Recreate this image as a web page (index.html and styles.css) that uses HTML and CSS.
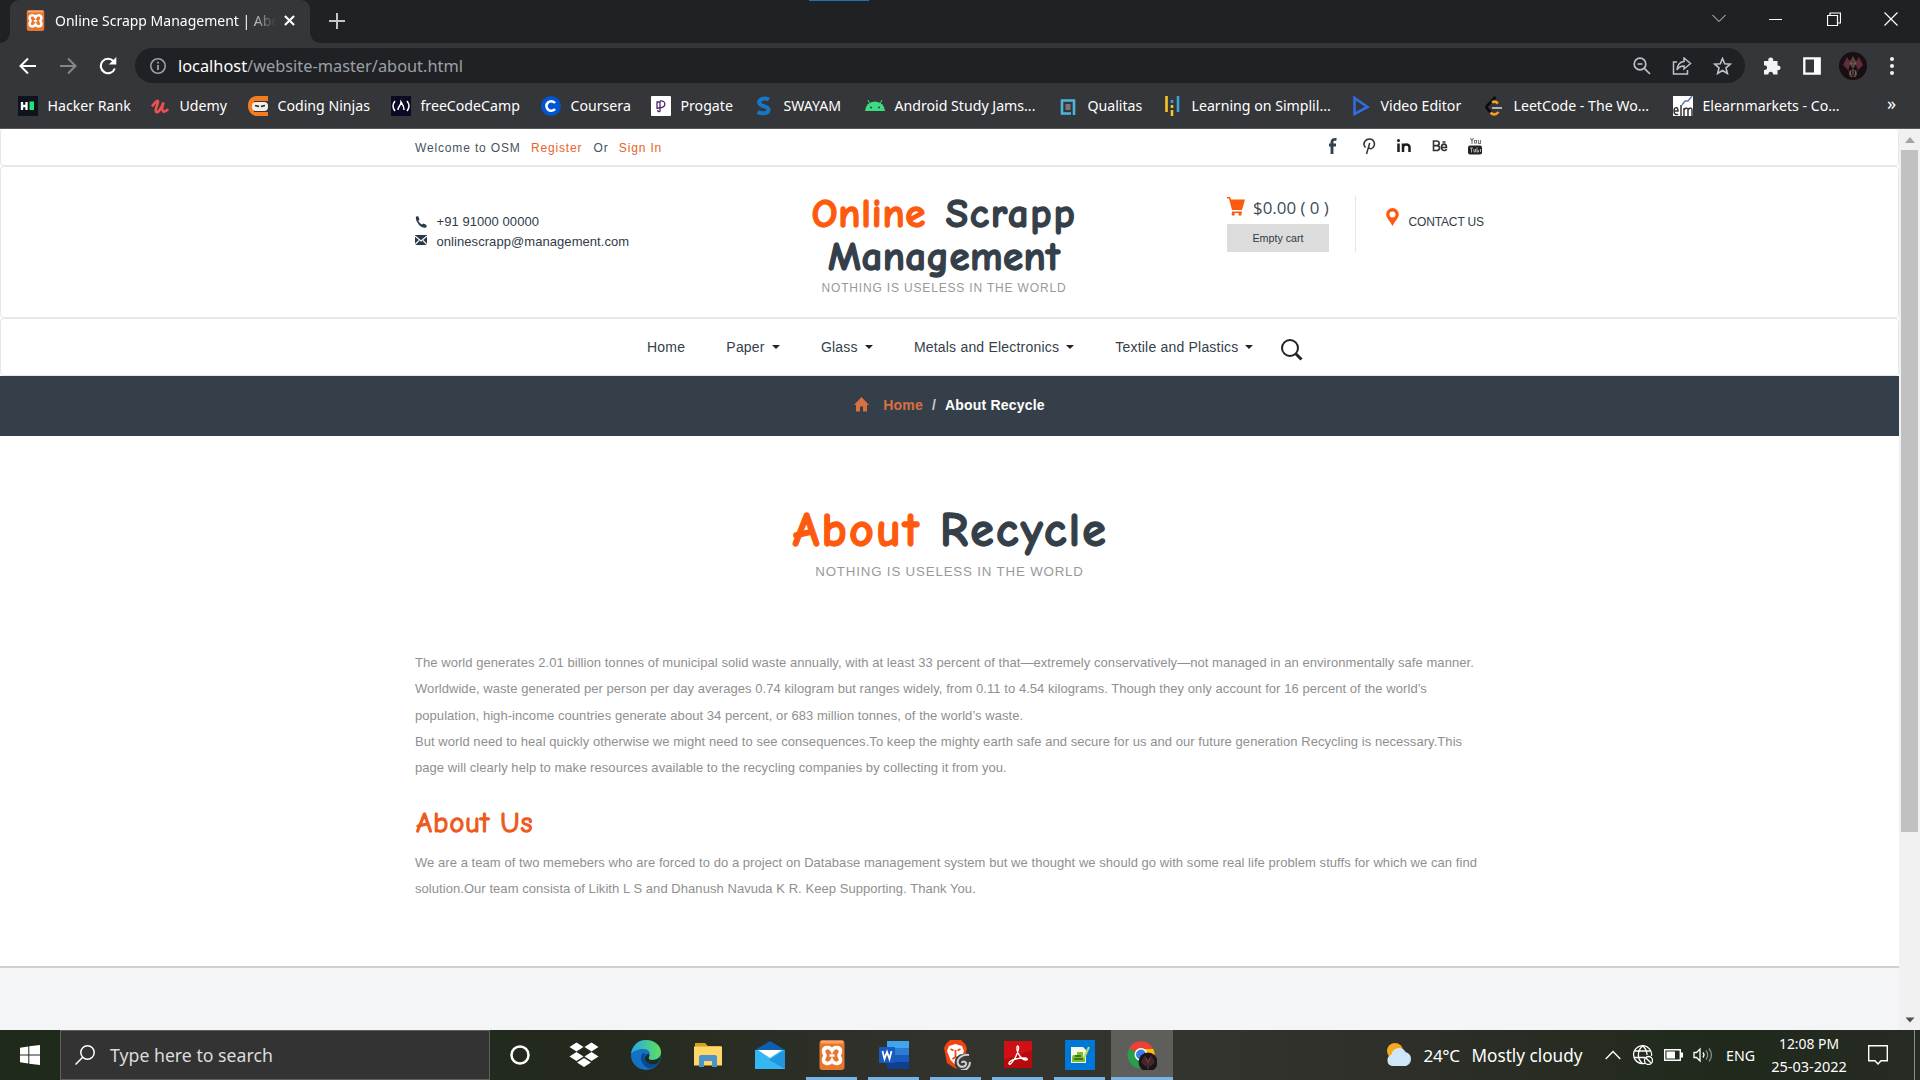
FILE: index.html
```html
<!DOCTYPE html>
<html lang="en">
<head>
<meta charset="utf-8">
<title>Online Scrapp Management | About</title>
<link rel="stylesheet" href="styles.css">
</head>
<body>
<svg width="0" height="0" class="defs">
  <symbol id="xampp" viewBox="0 0 30 30"><rect x="2.500" width="25" height="30" rx="3" fill="#e8772e"/><rect x="4" y="1" width="22" height="2.500" fill="#f4a86f"/><path d="M15 10.500C12.500 6 6.500 7 6.500 11.500c0 2 1.500 2.500 1.500 4s-1.500 2-1.500 4c0 4.500 6 5.500 8.500 1 2.500 4.500 8.500 3.500 8.500-1 0-2-1.500-2.500-1.500-4s1.500-2 1.500-4c0-4.500-6-5.500-8.500-1z" fill="none" stroke="#fff" stroke-width="3.600"/><path d="M12.500 15.500h5" stroke="#fff" stroke-width="2.500"/></symbol>
</svg>

<header class="browser">
  <div class="tabstrip">
    <div class="tab">
      <svg class="favicon" viewBox="0 0 30 30"><use href="#xampp"/></svg>
      <span class="tab-title">Online Scrapp Management | Abo</span>
      <svg class="tab-close" viewBox="0 0 12 12"><path d="M1 1l10 10M11 1L1 11" stroke="#fff" stroke-width="2.300"/></svg>
    </div>
    <svg class="tab-new" viewBox="0 0 16 16"><path d="M8 0v16M0 8h16" stroke="#c3c5c8" stroke-width="2"/></svg>
    <span class="drag-mark"></span>
    <div class="win-controls">
      <svg width="14" height="9" viewBox="0 0 14 9"><path d="M.5 1L7 7.500 13.500 1" fill="none" stroke="#ddd"/></svg>
      <svg width="14" height="14" viewBox="0 0 14 14"><path d="M0 7.500h13" stroke="#fff"/></svg>
      <svg width="14" height="14" viewBox="0 0 14 14"><path d="M.5 3.500h10v10H.500zM3 3V1h10.500v10H11" fill="none" stroke="#fff" stroke-width="1.200"/></svg>
      <svg width="14" height="14" viewBox="0 0 14 14"><path d="M.5.5l13 13M13.500.500l-13 13" stroke="#fff" stroke-width="1.200"/></svg>
    </div>
  </div>

  <div class="toolbar">
    <svg width="18" height="18" viewBox="0 0 18 18"><path d="M17 9H2M9 1.500L1.500 9 9 16.500" fill="none" stroke="#fff" stroke-width="2"/></svg>
    <svg width="18" height="18" viewBox="0 0 18 18"><path d="M1 9h15M9 1.500L16.500 9 9 16.500" fill="none" stroke="#85878a" stroke-width="2"/></svg>
    <svg width="18" height="18" viewBox="0 0 18 18"><path d="M15.800 11.500A7.200 7.200 0 1 1 14.500 4.300" fill="none" stroke="#fff" stroke-width="2.100"/><path d="M17.300 0v7.500h-7.500z" fill="#fff"/></svg>
    <div class="omnibox">
      <svg width="18" height="18" viewBox="0 0 18 18"><circle cx="9" cy="9" r="7.200" fill="none" stroke="#9aa0a6" stroke-width="1.600"/><path d="M9 8v5M9 4.800v1.800" stroke="#9aa0a6" stroke-width="1.800"/></svg>
      <span class="url"><b>localhost</b>/website-master/about.html</span>
      <div class="omni-actions">
        <svg width="18" height="18" viewBox="0 0 18 18"><circle cx="7" cy="7" r="5.800" fill="none" stroke="#bdc1c6" stroke-width="1.700"/><path d="M4.500 7h5M11.300 11.300L17 17" stroke="#bdc1c6" stroke-width="1.700"/></svg>
        <svg width="20" height="18" viewBox="0 0 20 18"><path d="M5 5H1.500v12h14v-4M12 1l6.500 5.500L12 12V9c-3.500 0-5.500 1-7 4 .3-4.500 2.500-8 7-8.500z" fill="none" stroke="#bdc1c6" stroke-width="1.500"/></svg>
        <svg width="19" height="18" viewBox="0 0 19 18"><path d="M9.500 1.500l2.200 5.300 5.600.4-4.300 3.700 1.400 5.600-4.900-3-4.900 3L6 10.900 1.700 7.200l5.600-.4z" fill="none" stroke="#bdc1c6" stroke-width="1.600"/></svg>
      </div>
    </div>
    <div class="tool-right">
      <svg width="19" height="19" viewBox="0 0 19 19"><path d="M1 5h4.500a2.500 2.500 0 1 1 4.500 0h4.500v4.500a2.400 2.400 0 1 1 0 4.600V18.500H10a2.300 2.300 0 1 0-4.500 0H1V14a2.400 2.400 0 1 0 0-4.600z" fill="#f1f3f4"/></svg>
      <svg width="18" height="18" viewBox="0 0 18 18"><path d="M1.300 1.300h15.400v15.400H1.300z" fill="none" stroke="#fff" stroke-width="2.300"/><path d="M11 1h6v16h-6z" fill="#fff"/></svg>
      <svg width="28" height="28" viewBox="0 0 28 28"><circle cx="14" cy="14" r="14" fill="#170f12"/><path d="M8 5l-4 8 5 5 3-7zM20 5l4 8-5 5-3-7z" fill="#5e2d3b"/><path d="M14 4l4 7-4 6-4-6zM9 17l5 8 5-8-2 8h-6z" fill="#57453d"/><path d="M11 11l2 1M17 11l-2 1M14 17v6M12 18l-1 5M16 18l1 5" stroke="#8a6a66"/></svg>
      <svg width="6" height="20" viewBox="0 0 6 20"><g fill="#f1f3f4"><circle cx="3" cy="3" r="2"/><circle cx="3" cy="10" r="2"/><circle cx="3" cy="17" r="2"/></g></svg>
    </div>
  </div>

  <nav class="bookmarks">
    <a><svg viewBox="0 0 20 20"><path d="M0 0h20v20H0z" fill="#0e141e"/><path d="M4 6v8M8.500 6v8M4 10h4.500" stroke="#fff" stroke-width="2.300"/><path d="M11.500 5.500h4.500v8.500h-4.500z" fill="#1ee57a"/></svg>Hacker Rank</a>
    <a><svg viewBox="0 0 20 20"><path d="M2 10.500C4.500 7 7.500 3.500 8 5.500S4.500 13 6 15.500 11.500 12.500 13.500 6.500c-1.500 4.500-2 8 0 9 1.500.5 3-.5 4.500-2.500" fill="none" stroke="#ea5252" stroke-width="2.700"/></svg>Udemy</a>
    <a><svg viewBox="0 0 20 20"><path d="M20 0H8C2 1 0 5 0 10s3 9 8 10h12v-4H6V5h14z" fill="#f47b20"/><rect x="4" y="6" width="16" height="9" rx="4" fill="#f5eee7"/><path d="M7 9.500l4 1M17 9.500l-4 1" stroke="#222" stroke-width="1.600"/></svg>Coding Ninjas</a>
    <a><svg viewBox="0 0 20 20"><path d="M0 0h20v20H0z" fill="#0a0a23"/><path d="M4 5Q0 10 4 15M16 5q4 5 0 10M7 14c0-4 3-4 3-8 2 3 3 4 3 8" fill="none" stroke="#fff" stroke-width="1.500"/></svg>freeCodeCamp</a>
    <a><svg viewBox="0 0 20 20"><circle cx="10" cy="10" r="10" fill="#0056d2"/><path d="M14 7a4.800 4.800 0 1 0 0 6" fill="none" stroke="#fff" stroke-width="2.600"/></svg>Coursera</a>
    <a><svg viewBox="0 0 20 20"><rect width="20" height="20" rx="1" fill="#fff"/><path d="M6 13V6h3v6H6M9 5c6-1 7 6 0 7v3c0 1-3 1-2-1" fill="none" stroke="#4b2a6b" stroke-width="1.300"/></svg>Progate</a>
    <a><svg viewBox="0 0 20 20"><path d="M15 3.500C9 1 4 4 5.500 7.500S15 10 14.500 14 8 18 3.500 16" fill="none" stroke="#1677c6" stroke-width="4"/></svg>SWAYAM</a>
    <a><svg viewBox="0 0 20 20"><path d="M0 15a10 9.500 0 0 1 20 0z" fill="#3ddc84"/><path d="M5 8L3 4M15 8l2-4" stroke="#3ddc84"/><circle cx="6" cy="11.500" r="1" fill="#244"/><circle cx="14" cy="11.500" r="1" fill="#244"/></svg>Android Study Jams...</a>
    <a><svg viewBox="0 0 20 20"><path d="M13 17.500H4v-13h12V19" fill="none" stroke="#4cb5de" stroke-width="2.600"/><path d="M7.500 8h5v6h-5z" fill="#777"/></svg>Qualitas</a>
    <a><svg viewBox="0 0 20 20"><path d="M4.500 0v16M10 9v3M10 14v6" stroke="#f7c325" stroke-width="2.600"/><path d="M16 0v16M10 4v3" stroke="#3ba0d8" stroke-width="2.600"/></svg>Learning on Simplil...</a>
    <a><svg viewBox="0 0 20 20"><path d="M3.500 2v16L16.500 11z" fill="none" stroke="#2f6de0" stroke-width="2.600"/></svg>Video Editor</a>
    <a><svg viewBox="0 0 20 20"><path d="M11.500 1L3.500 9.500" stroke="#0b0b0b" stroke-width="2.600"/><path d="M3.500 9q-2 2 0 4l4 4" fill="none" stroke="#0b0b0b" stroke-width="2.600"/><path d="M6.500 16.500q4 4 8-.5M8 6.500q3-2 6 1" fill="none" stroke="#f9a01b" stroke-width="2.600"/><path d="M8 12h10" stroke="#b3b3b3" stroke-width="2"/></svg>LeetCode - The Wo...</a>
    <a><svg viewBox="0 0 20 20"><path d="M0 0h20v20H0z" fill="#fff"/><path d="M9 9l3-4 3 0 4-5" fill="none" stroke="#5a74b8" stroke-width="1.400"/><path d="M1 15h4c0-5-4-4-4 0s3 4 4 3M8 9v11M11 20v-8M11 14c2-3 4-2 4 0v6M15 14c2-3 4-2 4 0v6" fill="none" stroke="#333" stroke-width="1.500"/></svg>Elearnmarkets - Co...</a>
    <span class="more">»</span>
  </nav>
</header>

<div class="viewport">
<div class="page">
  <div class="topbar">
    <div class="container">
      <p class="welcome">Welcome to OSM <a>Register</a> Or <a>Sign In</a></p>
      <div class="social">
        <svg viewBox="0 0 16 18"><path d="M7 17V9.500M4 8h7M7 10V5q0-3 4.500-2.600" fill="none" stroke="#34414f" stroke-width="2.900"/></svg>
        <svg viewBox="0 0 16 18"><path d="M4.500 10.500C1 7 4 2 8.500 2s6.500 5 3.500 8.500c-2 2-4 1-4.300 0M8.700 6L5.500 17" fill="none" stroke="#333" stroke-width="1.500"/></svg>
        <svg viewBox="0 0 16 18"><path d="M2.500 6.500V15M7 6.500V15M7 10q.5-2.500 3.300-2.500T13.500 10v5" fill="none" stroke="#1c1c1c" stroke-width="2.500"/><circle cx="2.500" cy="3.500" r="1.500" fill="#1c1c1c"/></svg>
        <svg viewBox="0 0 16 18"><path d="M1.500 4v9.500h3c4 0 4-4.700.5-4.900 3-.3 3-4.600-.5-4.600zM1.500 8.600H5M9.500 10.500h5c0-4.500-5-4.500-5 0 0 3.500 4.500 4 5 1.500M10.500 5h3" fill="none" stroke="#333" stroke-width="1.600"/></svg>
        <svg viewBox="0 0 16 18"><rect x="1" y="8.500" width="14" height="9" rx="2" fill="#222"/><path d="M3.500 1l1.500 3v3M6.500 1L5 4M7.500 3.500v2.500h2V3.500zM11.500 3v3.500h2V3" fill="none" stroke="#777" stroke-width="1.100"/><path d="M3 11h3M4.500 11v4.500M7 12v3h1.500v-3M10 10.500V15h1.500v-2M13.500 12v3" fill="none" stroke="#aaa"/></svg>
      </div>
    </div>
  </div>

  <div class="masthead">
    <div class="container">
      <ul class="contact-list">
        <li><svg viewBox="0 0 12 12"><path d="M1 .5L3.300.300 4.500 3.500 3.300 5q1.500 2.500 3.500 3.500L8.500 7.500l3 1.500v2.300Q8 13 4 9 0 4 1 .5z" fill="#2b3a48"/></svg>+91 91000 00000</li>
        <li><svg viewBox="0 0 12 12"><path d="M0 0h12v10H0z" fill="#2b3a48"/><path d="M0 1l6 5 6-5M0 9.500l4-4M12 9.500l-4-4" fill="none" stroke="#fff" stroke-width="1.100"/></svg>onlinescrapp@management.com</li>
      </ul>
      <div class="logo">
        <h1><span class="w1">Online</span> <span class="w2">Scrapp</span><br><span class="w3">Management</span></h1>
        <p>NOTHING IS USELESS IN THE WORLD</p>
      </div>
      <div class="cart">
        <div class="total"><svg viewBox="0 0 18 19"><path d="M0 0h3l1 2.500h14L15 13H5L2 1.500H0zM5 14.500h10V16H5z" fill="#fe5a0e"/><circle cx="6.200" cy="17" r="1.700" fill="#fe5a0e"/><circle cx="13" cy="17" r="1.700" fill="#fe5a0e"/></svg><span>$0.00 ( 0 )</span></div>
        <button>Empty cart</button>
      </div>
      <div class="locate">
        <svg viewBox="0 0 13 18"><path d="M6.500 0A6.300 6.300 0 0 0 .2 6.500C.2 10 4 13 6.500 18 9 13 12.800 10 12.800 6.500A6.300 6.300 0 0 0 6.500 0zm0 3.500a3 3 0 1 1 0 6.100 3 3 0 0 1 0-6.100z" fill="#fe5a0e"/></svg>
        <span>CONTACT US</span>
      </div>
    </div>
  </div>

  <nav class="menu">
    <a>Home</a>
    <a>Paper<i></i></a>
    <a>Glass<i></i></a>
    <a>Metals and Electronics<i></i></a>
    <a>Textile and Plastics<i></i></a>
    <svg viewBox="0 0 22 22"><circle cx="9" cy="9" r="8" fill="none" stroke="#222" stroke-width="2"/><path d="M14.500 14.500L20.500 20.500" stroke="#222" stroke-width="3"/></svg>
  </nav>

  <div class="crumbs">
    <svg viewBox="0 0 15 15"><path d="M7.500 0L15 8h-2v6.500H9V9.500H6v5H2V8H0z" fill="#d9703f"/></svg>
    <a>Home</a><span class="sep">/</span><span>About Recycle</span>
  </div>

  <main class="about">
    <h2><span class="w1">About</span><span class="w2">Recycle</span></h2>
    <p class="tagline">NOTHING IS USELESS IN THE WORLD</p>
    <p class="copy">The world generates 2.01 billion tonnes of municipal solid waste annually, with at least 33 percent of that—extremely conservatively—not managed in an environmentally safe manner.<br>Worldwide, waste generated per person per day averages 0.74 kilogram but ranges widely, from 0.11 to 4.54 kilograms. Though they only account for 16 percent of the world’s<br>population, high-income countries generate about 34 percent, or 683 million tonnes, of the world’s waste.<br>But world need to heal quickly otherwise we might need to see consequences.To keep the mighty earth safe and secure for us and our future generation Recycling is necessary.This<br>page will clearly help to make resources available to the recycling companies by collecting it from you.</p>
    <h3>About Us</h3>
    <p class="copy">We are a team of two memebers who are forced to do a project on Database management system but we thought we should go with some real life problem stuffs for which we can find<br>solution.Our team consista of Likith L S and Dhanush Navuda K R. Keep Supporting. Thank You.</p>
  </main>
  <div class="footer"></div>
</div>
<div class="scrollbar">
  <svg viewBox="0 0 20 20"><path d="M10 7l5 6H5z" fill="#a3a3a3"/></svg>
  <div class="thumb"></div>
  <svg viewBox="0 0 20 20"><path d="M10 12.500L5.500 7.500h9z" fill="#505050"/></svg>
</div>
</div>

<footer class="taskbar">
  <div class="start"><svg width="20" height="20" viewBox="0 0 20 20"><path d="M0 2.700l8.300-1.200v8H0zM9.300 1.300L20 0v9.500H9.300zM0 10.500h8.300v8L0 17.300zM9.300 10.500H20V20L9.300 18.700z" fill="#fff"/></svg></div>
  <div class="search"><svg width="20" height="20" viewBox="0 0 20 20"><circle cx="12.500" cy="7.500" r="6.700" fill="none" stroke="#fff" stroke-width="1.500"/><path d="M7.700 12.300L.5 19.500" stroke="#fff" stroke-width="1.500"/></svg>Type here to search</div>
  <div class="apps">
    <div class="app"><svg viewBox="0 0 30 30"><circle cx="15" cy="15" r="8.500" fill="none" stroke="#fff" stroke-width="2.500"/></svg></div>
    <div class="app"><svg viewBox="0 0 30 30"><path d="M7.500 2.500l7 4.500-7 4.500L.5 7zM22.500 2.500l7 4.500-7 4.500-7-4.500zM7.500 12l7 4.500-7 4.500-7-4.500zM22.500 12l7 4.500-7 4.500-7-4.500zM15 18l7 4.500-7 4.500-7-4.500z" fill="#fff"/></svg></div>
    <div class="app"><svg viewBox="0 0 30 30"><defs><linearGradient id="eg" x2="1"><stop offset="0" stop-color="#28a8e8"/><stop offset="1" stop-color="#5fe05a"/></linearGradient></defs><circle cx="15" cy="15" r="15" fill="#1272c4"/><path d="M0 14C2 4 8 0 15 0c9 0 15 6 15 12 0 5-4 8-9 8-3 0-4-1-3-3 2-4 0-8-5-8C7 9 2 11 0 14z" fill="url(#eg)"/><path d="M12 13c-4 4-2 12 5 15 4 1 8-2 10-5-5 3-12 1-13-4-.5-2 0-4 1-5z" fill="#0b4a92"/><path d="M18 17c-1 2 0 3 3 3 4 0 7-1.500 8.300-4 .5 2-.8 5-2.300 7-5 3-12 1-13-4 0-3 1-4 3-5 1.500 0 1.500 2 1 3z" fill="#1d2a25"/></svg></div>
    <div class="app"><svg viewBox="0 0 30 30"><path d="M2 3h10l3 3h13v4H2z" fill="#d9a216"/><path d="M1 6.500h28v19H1z" fill="#ffd667"/><path d="M6 27V17q0-2 2-2h14q2 0 2 2v10h-5v-6h-8v6z" fill="#4a94cc"/></svg></div>
    <div class="app"><svg viewBox="0 0 30 30"><path d="M0 10L15 1l15 9H0z" fill="#0f5fae"/><path d="M0 10h30v19H0z" fill="#35b8f1"/><path d="M30 10v19L14 20z" fill="#2196dc"/><path d="M3 10h24L15 18z" fill="#fff"/></svg></div>
    <div class="app open"><svg viewBox="0 0 30 30"><use href="#xampp"/></svg></div>
    <div class="app open"><svg viewBox="0 0 30 30"><path d="M8 1h22v28H8z" fill="#2b7cd3"/><path d="M8 1h22v7H8z" fill="#41a5ee"/><path d="M8 15h22v7H8z" fill="#185abd"/><path d="M8 22h22v7H8z" fill="#103f91"/><rect y="7" width="16" height="16" rx="1" fill="#185abd"/><path d="M3.500 11l2 8L8 12l2.500 7 2-8" fill="none" stroke="#fff" stroke-width="1.800"/></svg></div>
    <div class="app open"><svg viewBox="0 0 30 30"><path d="M9 0h11l4 4 2 4-3 14-8 7-9-6L3 8l2-4z" fill="#f4430f"/><path d="M8 6l6.500-2L21 6l2 5-3.500 9-5 5-5-5L6 11z" fill="#fff"/><path d="M9.500 9l3 1.500M19.500 9l-3 1.500M14.500 10v7M11.500 19l3-2 3 2" stroke="#f4430f" stroke-width="1.800" fill="none"/><circle cx="22" cy="22.500" r="8.500" fill="#3a3c3d"/><path d="M28 15c-7-1-13 4-11 9 2 4.500 9 3 8-1-1-2-4-2-4 0M20 30c5 1 9-3 9-8" fill="none" stroke="#cfcfcf" stroke-width="2"/></svg></div>
    <div class="app open"><svg viewBox="0 0 30 30"><path d="M1 1h28v27H1z" fill="#b8090c"/><path d="M1 1h28v9L1 20z" fill="#cf1115"/><path d="M6 23c1-3 8-5 15-5 4 0 4 2 2 2-4 0-10-7-9-13 .5-2 2-1 1.500 2C15 13 11 21 8 23.500 6.500 25 5.500 24 6 23z" fill="none" stroke="#fff" stroke-width="1.300"/></svg></div>
    <div class="app open"><svg viewBox="0 0 30 30"><path d="M0 0h30v30H0z" fill="#0078d7"/><path d="M6 7h12l3 3v13H6z" fill="#f2f7e8"/><path d="M8 15h4v-3h6v5h2v5H7v-5z" fill="#7bbf2c"/><path d="M9 19h9M10 16h6" stroke="#355a1a" stroke-width="1.300"/><path d="M24 7l-5 11" stroke="#bcd85a" stroke-width="2"/></svg></div>
    <div class="app open active"><svg viewBox="0 0 30 30"><path d="M14 15L2 8.500A13.500 13.500 0 0 1 26 8.500z" fill="#ea4335"/><path d="M14 9h12.300A13.500 13.500 0 0 1 15 28.500z" fill="#fbbc04"/><path d="M2.300 8.500A13.500 13.500 0 0 0 15 28.500l5-10-6-4z" fill="#2b9e4b"/><circle cx="14" cy="14.500" r="6.500" fill="#fff"/><circle cx="14" cy="14.500" r="5" fill="#3b7de9"/><circle cx="21" cy="22" r="9.500" fill="#1c1416"/><path d="M18 15l-4 7 5 5 2-6zM24 15l4 7-5 5-2-6z" fill="#45262e"/><path d="M19 18l2 4M23 18l-2 4M21 22v7" stroke="#6a4a4a"/></svg></div>
  </div>
  <div class="tray">
    <svg class="weather" viewBox="0 0 26 24"><circle cx="9" cy="8" r="8" fill="#f5a81c"/><path d="M6 23a6 6 0 0 1-.5-11.500A7.500 7.500 0 0 1 19.500 9 7.300 7.300 0 0 1 20 23z" fill="#cfe6f8"/></svg>
    <span class="temp">24°C</span><span class="sky">Mostly cloudy</span>
    <svg class="chev" viewBox="0 0 16 10"><path d="M.7 9L8 1.500 15.300 9" fill="none" stroke="#fff" stroke-width="1.400"/></svg>
    <svg class="globe" viewBox="0 0 20 20"><g fill="none" stroke="#fff" stroke-width="1.300"><path d="M12 18.300A9 9 0 1 1 18.500 11"/><path d="M9.500 1C4 6 4 14 9.500 18.500M10 1c3 3 4 6 4 9M1.500 6h16M1 12.500h11"/><circle cx="15.500" cy="15.500" r="4"/><path d="M12.700 12.700l5.600 5.600"/></g></svg>
    <svg class="battery" viewBox="0 0 19 12"><path d="M.7.700h15.600v10.600H.700z" fill="none" stroke="#fff" stroke-width="1.400"/><path d="M2.500 2.500h8.500v7H2.500zM17 3.500h2v5h-2z" fill="#fff"/></svg>
    <svg class="sound" viewBox="0 0 20 16"><path d="M1 5.500h2.500L7 2v12L3.500 10.500H1z" fill="none" stroke="#fff" stroke-width="1.300"/><path d="M10 5.500q2 2.500 0 5" fill="none" stroke="#fff" stroke-width="1.300"/><path d="M13 3.500q3.500 4.500 0 9M16 1.500q5 6.500 0 13" fill="none" stroke="#8a8f88" stroke-width="1.300"/></svg>
    <span class="lang">ENG</span>
    <div class="clock"><span class="time">12:08 PM</span><span class="date">25-03-2022</span></div>
    <svg class="notes" viewBox="0 0 20 20"><path d="M.7.700h18.600v15H13L10 19l-3-3.300H.700z" fill="none" stroke="#fff" stroke-width="1.400"/></svg>
    <span class="peek"></span>
  </div>
</footer>
</body>
</html>
```
FILE: styles.css
```css
* { box-sizing: border-box; }
body {
  margin: 0; width: 1920px; height: 1080px; overflow: hidden;
  display: flex; flex-direction: column;
  font-family: "Liberation Sans", Arial, sans-serif; background: #fff;
}
p, h1, h2, h3, ul { margin: 0; padding: 0; }
svg { display: block; flex: none; }
.defs { position: absolute; }

/* browser chrome */
.browser {
  height: 129px; background: #35363a; border-bottom: 1px solid #5a5a5c;
  font-family: "Noto Sans", "Segoe UI", sans-serif; color: #fff; flex: none;
}
.tabstrip { height: 43px; background: #202124; display: flex; align-items: flex-start; padding-left: 10px; position: relative; }
.tab {
  width: 300px; height: 43px; background: #35363a; border-radius: 9px 9px 0 0;
  display: flex; align-items: center; padding: 0 14px 2px 15px; position: relative;
}
.tab::before, .tab::after {
  content: ""; position: absolute; bottom: 0; width: 10px; height: 10px;
}
.tab::before { left: -10px; background: radial-gradient(circle at 0 0, #202124 9.500px, #35363a 10px); }
.tab::after { right: -10px; background: radial-gradient(circle at 100% 0, #202124 9.500px, #35363a 10px); }
.favicon { width: 21px; height: 21px; }
.tab-title {
  margin-left: 9px; width: 227px; font-size: 14px; white-space: nowrap;
  -webkit-mask-image: linear-gradient(90deg, #000 190px, transparent 221px);
  mask-image: linear-gradient(90deg, #000 190px, transparent 221px);
}
.tab-close { width: 11px; height: 11px; margin-left: 2px; }
.tab-new { width: 16px; height: 16px; margin: 13px 0 0 19px; }
.drag-mark { position: absolute; left: 809px; top: 0; width: 60px; height: 1px; background: #2272b4; }
.win-controls { margin-left: auto; display: flex; align-items: center; gap: 43.500px; padding: 0 22px 0 0; height: 37px; }

.toolbar { height: 45px; display: flex; align-items: center; padding-left: 19px; gap: 22px; }
.omnibox {
  width: 1610px; height: 35px; border-radius: 18px; background: #202124; margin-left: -4px;
  display: flex; align-items: center; padding: 0 13px 0 14px;
}
.url { margin-left: 11px; font-size: 16.350px; color: #9aa0a6; white-space: nowrap; }
.url b { font-weight: 400; color: #fff; }
.omni-actions { margin-left: auto; display: flex; align-items: center; gap: 21px; }
.tool-right { display: flex; align-items: center; gap: 21px; margin-left: -4px; }
.tool-right svg:nth-child(3) { margin-left: -3px; }
.tool-right svg:nth-child(4) { margin-left: 1px; }

.bookmarks {
  height: 35px; padding: 0 0 0 18px; display: grid; align-items: center;
  grid-template-columns: 132px 98px 143px 150px 110px 103px 111px 193px 104px 189px 133px 189px 214px auto;
  font-size: 14.150px; white-space: nowrap;
}
.bookmarks a { display: flex; align-items: center; gap: 9.500px; }
.bookmarks a svg { width: 20px; height: 20px; }
.more { font-size: 18px; line-height: 20px; margin-top: -5px; }

/* page */
.viewport { flex: 1; display: flex; min-height: 0; }
.page { width: 1899px; background: #fff; display: flex; flex-direction: column; }
.container { width: 1069px; margin: 0 auto; display: flex; }
.topbar, .masthead, .menu { border: 1px solid #e7e7e7; border-radius: 4px; }
.topbar { height: 37px; border-top: 0; }
.topbar .container { height: 36px; padding-top: 1px; align-items: center; justify-content: space-between; }
.welcome { font-size: 12px; letter-spacing: .85px; color: #47525d; }
.welcome a { color: #e8642a; margin: 0 7px 0 6px; }
.social { display: flex; gap: 19.500px; margin: -4px 1px 0 0; }
.social svg { width: 16px; height: 18px; }

.masthead { height: 152px; }
.contact-list { width: 330px; list-style: none; padding-top: 45px; font-size: 13px; letter-spacing: .065px; color: #2f3b47; }
.contact-list li { display: flex; align-items: center; height: 19.500px; }
.contact-list svg { width: 12px; height: 12px; margin-right: 9.500px; }
.logo { width: 398px; text-align: center; padding-top: 25px; }
.logo h1, .about h2, .about h3 {
  font-family: "Comic Sans MS", "Comic Neue", Lato, sans-serif; font-weight: 700;
  -webkit-text-stroke: 1.300px currentColor; stroke-linejoin: round; color: #353f49;
}
.logo h1 { font-size: 41px; line-height: 43px; white-space: nowrap; }
.w1 { color: #fe5a0e; }
.logo .w1 { letter-spacing: .7px; }
.logo .w2 { margin-left: 5px; letter-spacing: 1.700px; }
.logo .w3 { letter-spacing: .4px; }
.logo p { font-size: 12px; letter-spacing: .83px; color: #999; line-height: 14px; margin-top: 3px; }
.cart { width: 102px; margin-left: 84px; padding-top: 30px; }
.total { display: flex; height: 27px; align-items: flex-start; }
.total svg { width: 18px; height: 19px; }
.total span { font: 400 16.900px/22px "Open Sans", "Liberation Sans", sans-serif; margin-left: 8px; white-space: nowrap; color: #3f4a55; }
.cart button { display: block; border: 0; padding: 0; width: 102px; height: 28px; background: #dcdcdc; color: #2f3b47; font: 10.700px "Liberation Sans", sans-serif; }
.locate { margin: 29px 0 0 26px; height: 56px; border-left: 1px solid #e7e7e7; padding: 12px 0 0 29.500px; display: flex; }
.locate svg { width: 13px; height: 18px; }
.locate span { font-size: 12px; letter-spacing: -.15px; margin: 7px 0 0 10px; color: #2f3b47; white-space: nowrap; }

.menu { height: 58px; display: flex; align-items: center; padding: 0 0 1px 646px; gap: 41.200px; font-size: 14px; letter-spacing: .2px; color: #35404b; white-space: nowrap; }
.menu a { display: flex; align-items: center; }
.menu i { border: 4px solid transparent; border-top-color: #222; border-bottom: 0; margin-left: 7px; }
.menu svg { width: 22px; height: 22px; margin: 6px 0 0 -13.500px; }

.crumbs { height: 60px; background: #353f49; display: flex; justify-content: center; align-items: center; padding-bottom: 2px; font-size: 14px; letter-spacing: .2px; font-weight: 700; color: #fff; }
.crumbs svg { width: 15px; height: 15px; margin: -2px 14px 0 0; }
.crumbs a { color: #d9703f; }
.crumbs .sep { margin: 0 9px; color: #ccc; }

.about { height: 530px; width: 1069px; margin: 0 auto; padding-top: 66px; }
.about h2 { font-size: 48px; line-height: 58px; display: flex; justify-content: center; gap: 19px; letter-spacing: 2.200px; margin-right: -2px; }
.tagline { font-size: 13.300px; letter-spacing: .83px; color: #999; text-align: center; line-height: 16px; margin-top: 4px; }
.copy { font-size: 13px; letter-spacing: .055px; line-height: 26.250px; color: #8f8f8f; white-space: nowrap; }
.tagline + .copy { margin-top: 70px; }
.about h3 { font-size: 28px; line-height: 34px; font-weight: 400; color: #ee5a1c; margin: 25px 0 9.500px 1px; letter-spacing: 1.100px; }
.footer { flex: 1; background: #f4f5f7; border-top: 2px solid #cfd0d1; }

.scrollbar { width: 21px; background: #f1f1f1; display: flex; flex-direction: column; align-items: center; padding-top: 1px; }
.scrollbar svg { width: 20px; height: 20px; }
.thumb { width: 17px; height: 682px; background: #c1c1c1; margin-bottom: auto; }

/* taskbar */
.taskbar {
  height: 50px; flex: none; display: flex; color: #fff;
  font-family: "Noto Sans", "Segoe UI", sans-serif;
  background: linear-gradient(90deg, #1f2a1b, #23291e 30%, #33332d 50%, #34342f 62%, #2a2d25 78%, #20291c 90%, #262b24);
}
.start { width: 60px; display: flex; align-items: center; justify-content: center; }
.search { width: 430px; background: #333; border: 1px solid #5f605e; display: flex; align-items: center; gap: 15px; padding-left: 14px; font-size: 17.700px; color: #dcdcdc; }
.apps { display: flex; margin-left: -1px; }
.app { width: 62px; display: flex; align-items: center; justify-content: center; position: relative; }
.app:first-child { width: 62px; margin-right: 2px; }
.app svg { width: 30px; height: 30px; }
.app.open::after { content: ""; position: absolute; left: 5px; right: 6px; bottom: 0; height: 3px; background: #76b3e8; }
.app.active { background: #5e5e5a; }
.app.active::after { left: 0; right: 0; }
.tray { display: flex; align-items: center; margin-left: auto; white-space: nowrap; }
.weather { width: 26px; height: 24px; margin-right: 12px; }
.temp { font-size: 17px; width: 48px; letter-spacing: -.3px; }
.sky { font-size: 17.170px; width: 133px; }
.chev { width: 16px; height: 10px; margin-right: 12.500px; }
.globe { width: 20px; height: 20px; margin-right: 11px; }
.battery { width: 19px; height: 12px; margin-right: 10px; }
.sound { width: 20px; height: 16px; margin-right: 13px; }
.lang { font-size: 14.200px; width: 44px; }
.clock { width: 78px; display: flex; flex-direction: column; align-items: center; line-height: 23px; }
.time { font-size: 13.900px; }
.date { font-size: 14.500px; }
.notes { width: 20px; height: 20px; margin: 0 26px 0 20px; }
.peek { width: 6px; height: 50px; border-left: 1px solid #8a8d87; }
```
